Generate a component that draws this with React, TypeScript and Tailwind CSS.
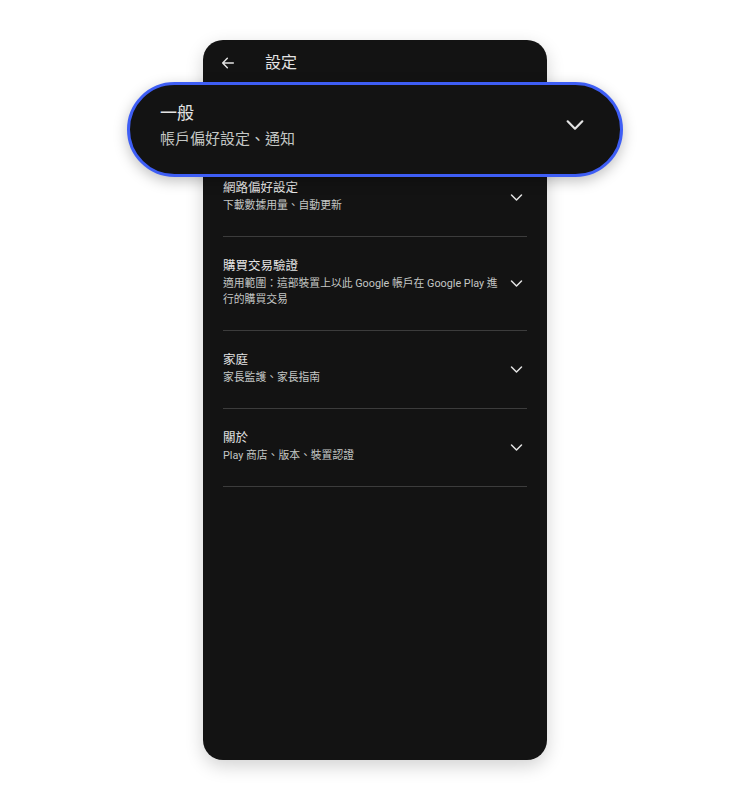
import React from "react";

const font = { fontFamily: '"Roboto", "Noto Sans CJK TC", "Noto Sans", sans-serif' };

function Chevron({ size = 14, className = "" }: { size?: number; className?: string }) {
  return (
    <svg width={size} height={size} viewBox="0 0 24 24" className={className} fill="none" stroke="currentColor" strokeWidth={2.4} strokeLinecap="round" strokeLinejoin="round">
      <path d="M4 8l8 8 8-8" />
    </svg>
  );
}

const rows = [
  { title: "網路偏好設定", sub: "下載數據用量、自動更新" },
  { title: "購買交易驗證", sub: "適用範圍：這部裝置上以此 Google 帳戶在 Google Play 進行的購買交易" },
  { title: "家庭", sub: "家長監護、家長指南" },
  { title: "關於", sub: "Play 商店、版本、裝置認證" },
];

export default function App() {
  return (
    <div className="w-[750px] h-[801px] bg-white relative overflow-hidden" style={font}>
      <div className="absolute left-[203px] top-[40px] w-[344px] h-[720px] rounded-[20px] bg-[#131313] shadow-[0_6px_18px_rgba(0,0,0,0.18)] flex flex-col">
        <div className="h-[45px] flex items-center px-[17px] shrink-0">
          <svg width="16" height="16" viewBox="0 0 24 24" fill="none" stroke="#e3e3e3" strokeWidth={2.2} strokeLinecap="round" strokeLinejoin="round">
            <path d="M20 12H4M11 5l-7 7 7 7" />
          </svg>
          <span className="ml-[29px] text-[16px] text-[#e3e3e3] leading-none">設定</span>
        </div>
        <div className="px-[20px] flex flex-col">
          <div className="h-[74px] border-b border-[#3c3c3c]" />
          {rows.map((r) => (
            <div key={r.title} className="flex items-center border-b border-[#3c3c3c] pt-[21px] pb-[22px]">
              <div className="flex-1 min-w-0 pr-[10px]">
                <div className="text-[12.5px] leading-[16px] text-[#e3e3e3]">{r.title}</div>
                <div className="text-[10.8px] leading-[16px] text-[#c4c7c5] mt-[2px]">{r.sub}</div>
              </div>
              <Chevron size={15} className="text-[#e3e3e3] mr-[3px]" />
            </div>
          ))}
        </div>
      </div>
      <div className="absolute left-[127px] top-[82px] w-[496px] h-[95px] rounded-full border-[3px] border-[#3e5ef5] bg-[#131313] shadow-[0_4px_14px_rgba(0,0,0,0.25)] flex items-center pl-[30px] pr-[34px] pb-[9px]">
        <div className="flex-1 flex flex-col">
          <div className="text-[17px] leading-[22px] text-[#e3e3e3]">一般</div>
          <div className="text-[15px] leading-[20px] text-[#c4c7c5] mt-[5px]">帳戶偏好設定、通知</div>
        </div>
        <Chevron size={22} className="text-[#e3e3e3]" />
      </div>
    </div>
  );
}
